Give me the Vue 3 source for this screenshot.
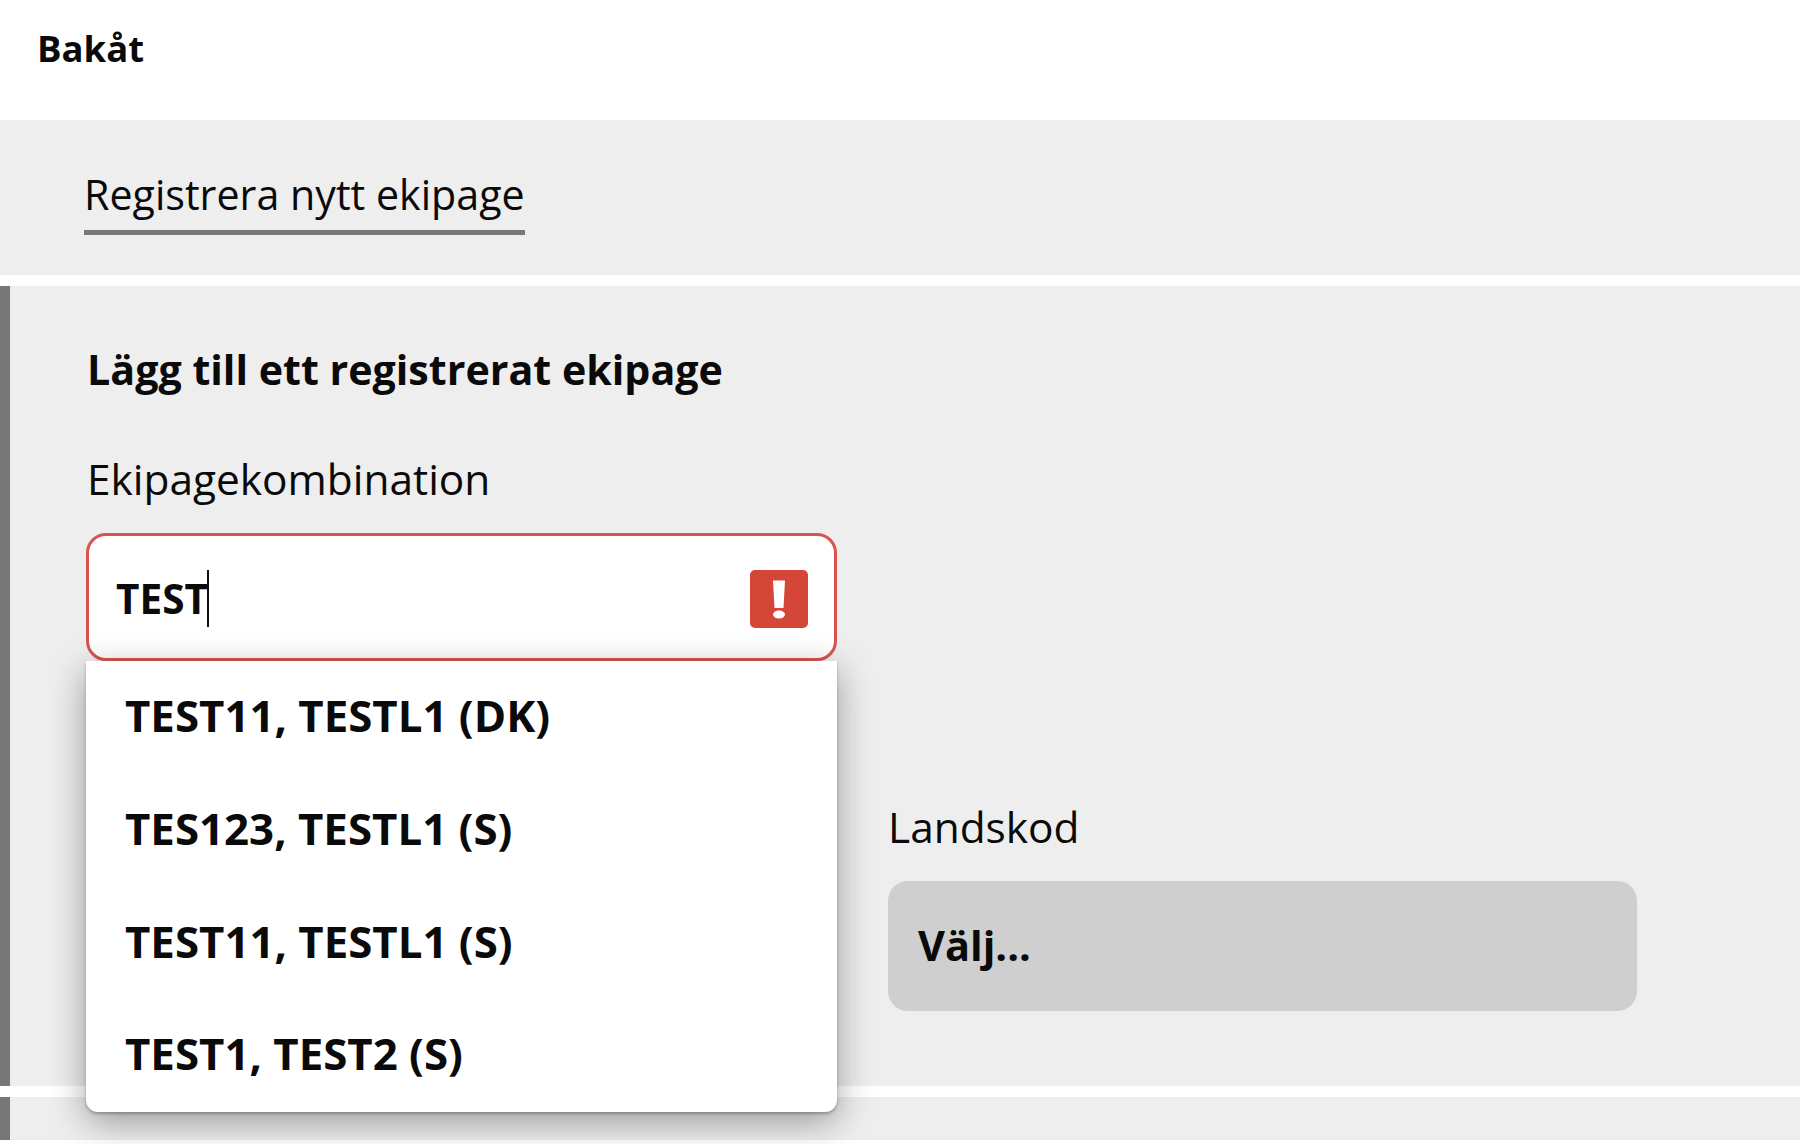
<template>
  <div class="page">
    <header class="top">
      <a class="back">Bakåt</a>
    </header>

    <nav class="tabs">
      <span class="tab">Registrera nytt ekipage</span>
    </nav>

    <section class="panel">
      <h2 class="title">Lägg till ett registrerat ekipage</h2>
      <div class="form">
        <div class="field combo">
          <label class="label">Ekipagekombination</label>
          <div class="input">
            <span class="value">TEST</span><span class="caret"></span>
            <svg class="err" viewBox="0 0 58 58" aria-hidden="true">
              <rect width="58" height="58" rx="5" fill="#d44638" />
              <path d="M23 10.500h12l-1.500 27.500h-9z" fill="#fff" />
              <ellipse cx="29" cy="44.500" rx="6" ry="4" fill="#fff" />
            </svg>
          </div>
          <ul class="menu">
            <li v-for="opt in options" :key="opt">{{ opt }}</li>
          </ul>
        </div>
        <div class="field country">
          <label class="label">Landskod</label>
          <div class="select">Välj...</div>
        </div>
      </div>
    </section>

    <section class="panel rest"></section>
  </div>
</template>

<script setup>
const options = [
  'TEST11, TESTL1 (DK)',
  'TES123, TESTL1 (S)',
  'TEST11, TESTL1 (S)',
  'TEST1, TEST2 (S)',
]
</script>

<style>
html,
body {
  margin: 0;
  background: #fff;
}
</style>

<style scoped>
.page {
  height: 1144px;
  overflow: hidden;
  font-family: "Open Sans", "Liberation Sans", sans-serif;
  color: #0a0a0a;
  font-size: 42.400px;
  display: flex;
  flex-direction: column;
}

.top {
  height: 120px;
  flex: none;
  box-sizing: border-box;
  padding: 0 0 25px 37px;
  display: flex;
  align-items: center;
}

.back {
  font-size: 36.500px;
  font-weight: 700;
}

.tabs {
  height: 155px;
  flex: none;
  background: #eee;
  padding-left: 84px;
  box-sizing: border-box;
}

.tab {
  display: inline-block;
  margin-top: 49px;
  height: 66px;
  font-size: 41.200px;
  line-height: 50px;
  box-sizing: border-box;
  border-bottom: 5px solid #777;
}

.panel {
  margin-top: 11px;
  background: #eee;
  border-left: 10px solid #777;
  box-sizing: border-box;
  height: 800px;
  padding: 58px 163px 0 76px;
  flex: none;
}

.rest {
  height: 43px;
  padding: 0;
}

.title {
  margin: 0 0 0 1px;
  font-size: 41.200px;
  font-weight: 700;
  line-height: 50px;
}

.form {
  display: grid;
  grid-template-columns: 751px 749px;
  column-gap: 51px;
  margin-top: 60px;
}

.field {
  position: relative;
}

.country {
  grid-column: 2;
  margin-top: 141px;
}

.combo {
  grid-column: 1 / 3;
  grid-row: 1;
  width: 751px;
}

.label {
  display: block;
  line-height: 50px;
  margin-bottom: 29px;
}

.combo .label {
  margin-left: 1px;
}

.input {
  height: 128px;
  box-sizing: border-box;
  border: 3px solid #d9534f;
  border-radius: 20px;
  background: #fff;
  display: flex;
  align-items: center;
  padding: 3px 26px 0 27px;
  font-size: 40.500px;
  font-weight: 700;
}

.caret {
  width: 2px;
  height: 57px;
  background: #111;
  margin-left: -1px;
}

.err {
  width: 58px;
  height: 58px;
  margin-left: auto;
}

.menu {
  position: absolute;
  left: 0;
  right: 0;
  top: 100%;
  margin: 0;
  padding: 0;
  list-style: none;
  background: #fff;
  border-radius: 0 0 12px 12px;
  box-shadow: 0 2px 3px rgba(0, 0, 0, 0.25), 0 10px 36px rgba(0, 0, 0, 0.36);
  font-size: 43.800px;
  font-weight: 700;
  z-index: 2;
}

.menu li {
  height: 112.750px;
  line-height: 108px;
  padding-left: 39px;
}

.select {
  height: 130px;
  box-sizing: border-box;
  border-radius: 20px;
  background: #cfcfcf;
  font-size: 41.500px;
  font-weight: 700;
  line-height: 128px;
  padding-left: 30px;
}
</style>
